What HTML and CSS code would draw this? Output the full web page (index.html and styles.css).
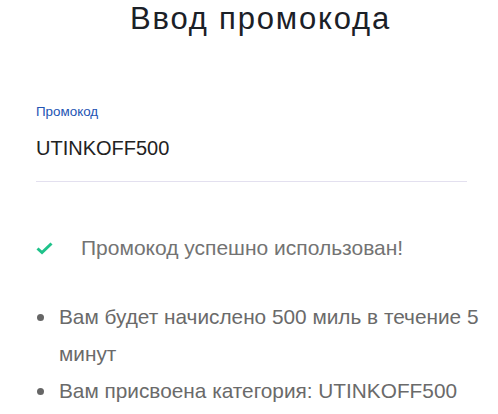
FILE: index.html
```html
<!DOCTYPE html>
<html>

<head>
	<title>Ввод промокода</title>
	<meta charset="utf-8">
	<link rel="stylesheet" href="styles.css">
</head>

<body>
	<div class="promo">
		<h1 class="promo-title">Ввод промокода</h1>

		<div class="field">
			<div class="field-label">Промокод</div>
			<div class="field-value">UTINKOFF500</div>
		</div>

		<div class="success">
			<svg class="success-icon" width="17" height="13" viewBox="0 0 17 13">
				<path d="M1.5 6.5 L6 10.5 L15.5 1.5" fill="none" stroke="#1fc28a" stroke-width="3" />
			</svg>
			<span>Промокод успешно использован!</span>
		</div>

		<ul class="bonus-list">
			<li>Вам будет начислено 500 миль в течение 5 минут</li>
			<li>Вам присвоена категория: UTINKOFF500</li>
		</ul>
	</div>
</body>

</html>
```

FILE: styles.css
```css
body {
	margin: 0;
	background: #fff;
	font-family: "Liberation Sans", Arial, sans-serif;
}

.promo {
	padding: 0 13px 0 36px;
}

.promo-title {
	margin: 0;
	font-size: 31px;
	font-weight: normal;
	letter-spacing: 1.8px;
	line-height: 37px;
	text-align: center;
	color: #1b2027;
}

.field {
	margin-top: 67px;
	margin-right: 18px;
	border-bottom: 1px solid #e3e0ef;
	padding-bottom: 21px;
}

.field-label {
	font-size: 13.4px;
	line-height: 16px;
	color: #2354b3;
}

.field-value {
	margin-top: 16px;
	font-size: 20px;
	line-height: 24px;
	color: #222;
}

.success {
	display: flex;
	align-items: center;
	gap: 28px;
	margin-top: 54px;
	font-size: 21px;
	line-height: 24px;
	color: #737373;
}

.bonus-list {
	list-style: none;
	margin: 38px 0 0;
	padding: 0;
	font-size: 20.8px;
	line-height: 37px;
	color: #6a6a6a;
}

.bonus-list li {
	position: relative;
	padding-left: 23px;
}

.bonus-list li::before {
	content: "";
	position: absolute;
	left: 1px;
	top: 16px;
	width: 7px;
	height: 7px;
	border-radius: 50%;
	background: #666;
}
```
